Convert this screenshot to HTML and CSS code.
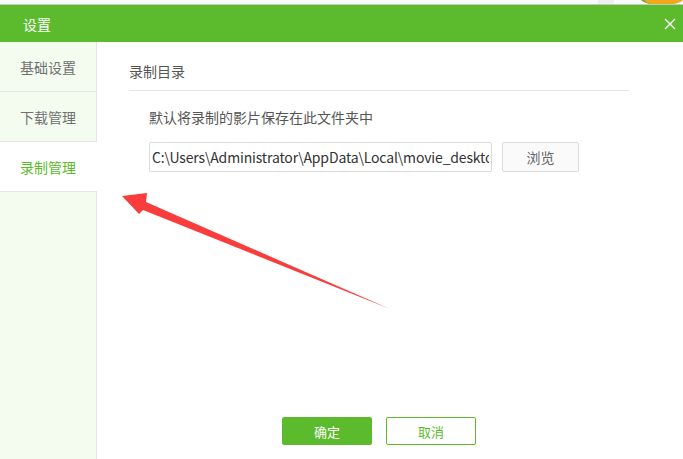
FILE: index.html
```html
<!DOCTYPE html>
<html lang="zh-CN">
<head>
  <meta charset="UTF-8">
  <title>设置</title>
  <link rel="stylesheet" href="styles.css">
</head>
<body>
  <div class="topstrip">
    <span class="tab-ghost"></span>
    <span class="orb"></span>
  </div>
  <div class="header">
    <span class="title">设置</span>
    <svg class="close" width="12" height="12" viewBox="0 0 12 12">
      <path d="M1 1L11 11M11 1L1 11" stroke="#fff" stroke-width="1.4" fill="none"/>
    </svg>
  </div>
  <div class="main">
    <div class="sidebar">
      <div class="nav-item">基础设置</div>
      <div class="nav-item">下载管理</div>
      <div class="nav-item active">录制管理</div>
    </div>
    <div class="content">
      <div class="section-title">录制目录</div>
      <div class="desc">默认将录制的影片保存在此文件夹中</div>
      <div class="path-row">
        <input class="path" type="text" value="C:\Users\Administrator\AppData\Local\movie_desktop\record">
        <button class="btn-browse">浏览</button>
      </div>
      <div class="footer">
        <button class="btn-ok">确定</button>
        <button class="btn-cancel">取消</button>
      </div>
    </div>
  </div>
  <svg class="arrow" width="683" height="459" viewBox="0 0 683 459">
    <polygon points="122,196 147,193 146,202 390,309 143,210 139,214" fill="#f93d3d"/>
  </svg>
</body>
</html>
```

FILE: styles.css
```css
body {
  margin: 0;
  width: 683px;
  height: 459px;
  overflow: hidden;
  position: relative;
  background: #fff;
  font-family: "Noto Sans CJK SC", "Noto Sans", sans-serif;
  color: #666;
}
.topstrip {
  height: 4px;
  border-bottom: 1px solid #c6c6c6;
  background: #fafafa;
  display: flex;
  overflow: hidden;
}
.tab-ghost {
  margin-left: 598px;
  width: 21px;
  background: #eeeef3;
}
.orb {
  margin-left: 27px;
  width: 50px;
  height: 12px;
  border-radius: 50%;
  background: #f0a81c;
  border-left: 3px solid #7ba630;
  margin-top: -7px;
}
.header {
  height: 37px;
  background: #5cbb2c;
  display: flex;
  align-items: center;
  justify-content: space-between;
  padding: 0 7px 0 23px;
}
.title {
  color: #fff;
  font-size: 14px;
}
.main {
  display: flex;
  height: 417px;
}
.sidebar {
  width: 96px;
  background: #f3fcef;
  border-right: 1px solid #e6e6e6;
}
.nav-item {
  height: 49px;
  line-height: 50px;
  padding-left: 20px;
  font-size: 14px;
  color: #707070;
  border-bottom: 1px solid #e6e6e6;
}
.nav-item.active {
  background: #fff;
  color: #5cbb2c;
  margin-right: -1px;
}
.content {
  margin-left: 32px;
  width: 500px;
  display: flex;
  flex-direction: column;
}
.section-title {
  height: 48px;
  line-height: 58px;
  font-size: 14px;
  color: #555;
  border-bottom: 1px solid #e5e5e5;
}
.desc {
  margin-top: 16px;
  padding-left: 20px;
  font-size: 14px;
  color: #555;
  line-height: 20px;
}
.path-row {
  display: flex;
  gap: 10px;
  margin-top: 15px;
  padding-left: 20px;
}
.path {
  width: 343px;
  height: 30px;
  box-sizing: border-box;
  border: 1px solid #dcdcdc;
  border-radius: 2px;
  padding: 0 2px;
  font-family: "Noto Sans CJK SC", "Noto Sans", sans-serif;
  font-size: 14px;
  letter-spacing: -0.15px;
  color: #333;
  outline: none;
}
.btn-browse {
  width: 77px;
  height: 30px;
  border: 1px solid #dcdcdc;
  border-radius: 2px;
  background: #fafafa;
  font-family: inherit;
  font-size: 14px;
  color: #666;
}
.footer {
  margin-top: auto;
  padding-bottom: 14px;
  display: flex;
  justify-content: center;
  gap: 14px;
}
.footer button {
  width: 90px;
  height: 28px;
  border-radius: 2px;
  font-family: inherit;
  font-size: 13px;
}
.btn-ok {
  background: #5cbb2c;
  border: 1px solid #5cbb2c;
  color: #fff;
}
.btn-cancel {
  background: #fff;
  border: 1px solid #5cbb2c;
  color: #5cbb2c;
}
.arrow {
  position: absolute;
  left: 0;
  top: 0;
  pointer-events: none;
}
```
